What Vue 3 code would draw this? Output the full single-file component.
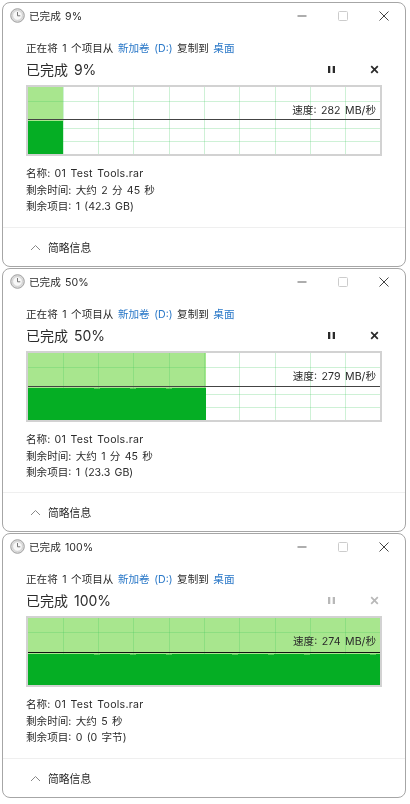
<template>
  <div class="page">
    <div v-for="w in windows" :key="w.percent" class="window" :style="{ height: w.height + 'px' }">
      <div class="title-bar">
        <svg class="clock" width="15" height="15" viewBox="0 0 15 15">
          <circle cx="7.5" cy="7.5" r="6.8" fill="#dcdcdc" stroke="#a0a0a0" />
          <circle cx="7.5" cy="7.5" r="4.8" fill="#f8f8f8" stroke="#c4c4c4" stroke-width="0.6" />
          <path d="M7.5 4v3.8h2.8" fill="none" stroke="#777" stroke-width="1" />
        </svg>
        <span class="title-text">已完成 {{ w.percent }}%</span>
        <div class="win-controls">
          <svg width="10" height="10" viewBox="0 0 10 10"><path d="M0.5 5h9" stroke="#777" stroke-width="1.2" /></svg>
          <svg width="10" height="10" viewBox="0 0 10 10"><rect x="0.5" y="0.5" width="9" height="9" rx="1" fill="none" stroke="#ccc" /></svg>
          <svg width="10" height="10" viewBox="0 0 10 10"><path d="M0.5 0.5l9 9M9.5 0.5l-9 9" stroke="#444" stroke-width="1" /></svg>
        </div>
      </div>

      <div class="content">
        <div class="copy-line">
          正在将 1 个项目从 <span class="link">新加卷 (D:)</span> 复制到 <span class="link">桌面</span>
        </div>
        <div class="status-row">
          <span class="status">已完成 {{ w.percent }}%</span>
          <div class="actions" :class="{ done: w.percent === 100 }">
            <svg width="9" height="9" viewBox="0 0 9 9"><path d="M1 1h2.3v7H1zM5.7 1H8v7H5.7z" fill="currentColor" /></svg>
            <svg width="9" height="9" viewBox="0 0 9 9"><path d="M1.2 1.2l6.6 6.6M7.8 1.2l-6.6 6.6" stroke="currentColor" stroke-width="1.7" /></svg>
          </div>
        </div>

        <div class="chart">
          <svg width="352" height="67" viewBox="0 0 352 67">
            <rect :width="fillWidth(w)" height="67" fill="#a8e68e" />
            <path v-for="x in gridX" :key="'x' + x" :d="`M${x}.5 0V67`" class="grid" />
            <path v-for="y in gridY" :key="'y' + y" :d="`M0 ${y}.5H352`" class="grid" />
            <path :d="areaPath(w)" fill="#05ae24" />
            <path :d="`M0 ${w.level - 0.5}H352`" :stroke="w.percent === 100 ? '#111' : '#444'" stroke-width="1" />
          </svg>
          <span class="speed">速度: {{ w.speed }} MB/秒</span>
        </div>

        <div class="info">
          <div>名称: <span class="file-name">01 Test Tools.rar</span></div>
          <div>剩余时间: {{ w.remaining }}</div>
          <div>剩余项目: {{ w.items }}</div>
        </div>
      </div>

      <div class="footer">
        <svg width="11" height="7" viewBox="0 0 11 7"><path d="M1 6l4.5-4.5L10 6" fill="none" stroke="#888" stroke-width="1" /></svg>
        <span>简略信息</span>
      </div>
    </div>
  </div>
</template>

<script setup>
const windows = [
  { percent: 9, height: 265, speed: 282, level: 33, remaining: "大约 2 分 45 秒", items: "1 (42.3 GB)" },
  { percent: 50, height: 264, speed: 279, level: 34, remaining: "大约 1 分 45 秒", items: "1 (23.3 GB)" },
  { percent: 100, height: 265, speed: 274, level: 35, remaining: "大约 5 秒", items: "0 (0 字节)" },
];

const gridX = [35, 70, 105, 141, 176, 211, 247, 282, 317];
const gridY = [14, 41, 54];

const fillWidth = (w) => (w.percent === 9 ? 35 : w.percent === 50 ? 178 : 352);

// top edge of the transfer graph, with a small notch here and there
const areaPath = (w) => {
  const end = fillWidth(w);
  let d = `M0 67V${w.level + 1}`;
  for (let x = 6; x < end; x += 6) {
    const notch = (x * 7) % 23 < 3 ? 0.5 : 0;
    d += `H${x}V${w.level + 1 + notch}`;
  }
  return d + `H${end}V67Z`;
};
</script>

<style scoped>
.page {
  width: 410px;
  height: 804px;
  box-sizing: border-box;
  padding: 2px 4px 0 2px;
  display: flex;
  flex-direction: column;
  gap: 1px;
  background: #fff;
  font-family: Inter, "Noto Sans CJK SC", sans-serif;
  color: #2b2b2b;
  word-spacing: 1.3px;
  filter: blur(0.3px);
}

.window {
  box-sizing: border-box;
  border: 1px solid #a6a6a6;
  border-radius: 8px;
  background: #fff;
  display: flex;
  flex-direction: column;
  flex-shrink: 0;
}

.title-bar {
  height: 25px;
  display: flex;
  align-items: center;
  padding-left: 7px;
  flex-shrink: 0;
}

.clock {
  margin-right: 4px;
}

.title-text {
  font-size: 10.6px;
}

.win-controls {
  margin-left: auto;
  display: flex;
  gap: 31px;
  padding-right: 16px;
}

.content {
  padding: 13px 23px 0 23px;
  flex: 1;
}

.copy-line {
  font-size: 10.6px;
  line-height: 16px;
  white-space: nowrap;
  word-spacing: 1.5px;
}

.link {
  color: #2a78c8;
}

.status-row {
  display: flex;
  align-items: center;
  height: 24px;
}

.status {
  font-size: 14px;
  word-spacing: 2px;
}

.actions {
  margin-left: auto;
  display: flex;
  gap: 34px;
  padding-right: 3px;
  color: #2a2a2a;
}

.actions.done {
  color: #b8b8b8;
}

.chart {
  position: relative;
  width: 356px;
  height: 71px;
  box-sizing: border-box;
  border: 2px solid #d2d2d2;
  margin-top: 4px;
}

.chart svg {
  display: block;
}

.grid {
  stroke: rgba(60, 200, 90, 0.25);
  stroke-width: 1;
  fill: none;
}

.speed {
  position: absolute;
  right: 4px;
  top: 16px;
  font-size: 10.6px;
  line-height: 16px;
  white-space: nowrap;
  word-spacing: 1.6px;
}

.info {
  margin-top: 10px;
  font-size: 10.6px;
  line-height: 16.5px;
}

.file-name {
  letter-spacing: 0.25px;
}

.footer {
  height: 39px;
  border-top: 1px solid #efefef;
  flex-shrink: 0;
  display: flex;
  align-items: center;
  gap: 7px;
  padding-left: 27px;
  box-sizing: border-box;
  font-size: 10.8px;
}
</style>
